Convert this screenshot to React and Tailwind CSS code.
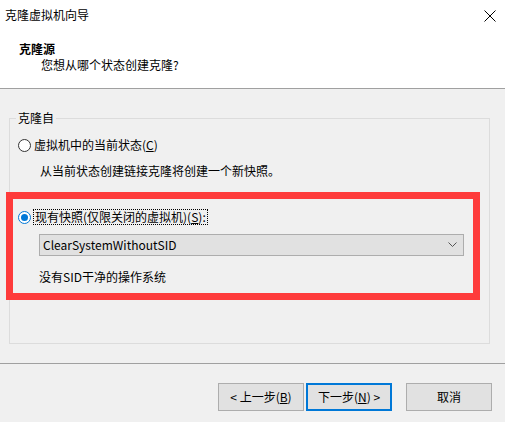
import React from "react";

const font = { fontFamily: '"Noto Sans CJK SC", "Noto Sans", sans-serif' };

function Btn({ children, primary }) {
  return (
    <div
      className={
        "w-[86px] h-[28px] flex items-center justify-center bg-[#e1e1e1] text-[12px] text-black " +
        (primary ? "border-2 border-[#0078d7]" : "border border-[#adadad]")
      }
    >
      {children}
    </div>
  );
}

export default function App() {
  return (
    <div
      className="relative w-[505px] h-[422px] bg-[#f0f0f0] flex flex-col overflow-hidden text-[12px] leading-[16px] text-black"
      style={font}
    >
      {/* header */}
      <div className="h-[89px] bg-white border-b border-[#a0a0a0] flex flex-col">
        <div className="h-[30px] flex items-center justify-between pl-[5px] pr-[9px]">
          <span>克隆虚拟机向导</span>
          <svg width="12" height="12" viewBox="0 0 12 12" className="mt-[1px]">
            <path d="M0.5 0.5 L11.5 11.5 M11.5 0.5 L0.5 11.5" stroke="#000" strokeWidth="1" fill="none" />
          </svg>
        </div>
        <div className="pl-[19px] pt-[11px] font-bold">克隆源</div>
        <div className="pl-[41px] pt-[0px]">您想从哪个状态创建克隆?</div>
      </div>

      {/* body */}
      <div className="flex-1 px-[9px] pt-[21px]">
        <fieldset className="h-[234px] w-[481px] border border-[#dcdcdc] pl-[8px]">
          <legend className="ml-[-2px] px-[2px] leading-[16px]">克隆自</legend>
          <div className="mt-[11px] flex items-center h-[16px]">
            <span className="w-[13px] h-[13px] rounded-full border border-[#333333] bg-white" />
            <span className="ml-[3px]">
              虚拟机中的当前状态(<span className="underline">C</span>)
            </span>
          </div>
          <div className="mt-[10px] pl-[22px]">从当前状态创建链接克隆将创建一个新快照。</div>
          <div className="mt-[30px] flex items-center h-[16px]">
            <span className="w-[13px] h-[13px] rounded-full border border-[#0078d7] bg-white flex items-center justify-center">
              <span className="w-[7px] h-[7px] rounded-full bg-[#0078d7]" />
            </span>
            <span className="ml-[2px] border border-dotted border-black leading-[14px] px-[1px]">
              现有快照(仅限关闭的虚拟机)(<span className="underline">S</span>):
            </span>
          </div>
          <div className="mt-[9px] ml-[21px] w-[425px] h-[22px] bg-[#e1e1e1] border border-[#adadad] flex items-center justify-between pl-[3px] pr-[6px]">
            <span>ClearSystemWithoutSID</span>
            <svg width="9" height="6" viewBox="0 0 9 6">
              <path d="M0.5 0.5 L4.5 4.5 L8.5 0.5" stroke="#555" strokeWidth="1" fill="none" />
            </svg>
          </div>
          <div className="mt-[13px] ml-[21px]">没有SID干净的操作系统</div>
        </fieldset>
      </div>

      {/* footer */}
      <div className="h-[59px] border-t border-[#a0a0a0] flex justify-end items-start pt-[19px] pr-[13px]">
        <Btn>
          &lt; 上一步(<span className="underline">B</span>)
        </Btn>
        <div className="w-[2px]" />
        <Btn primary>
          下一步(<span className="underline">N</span>) &gt;
        </Btn>
        <div className="w-[14px]" />
        <Btn>取消</Btn>
      </div>

      {/* red annotation */}
      <div className="absolute left-[6px] top-[192px] w-[474px] h-[108px] border-[7px] border-[#fe3b3b] pointer-events-none" />
    </div>
  );
}
